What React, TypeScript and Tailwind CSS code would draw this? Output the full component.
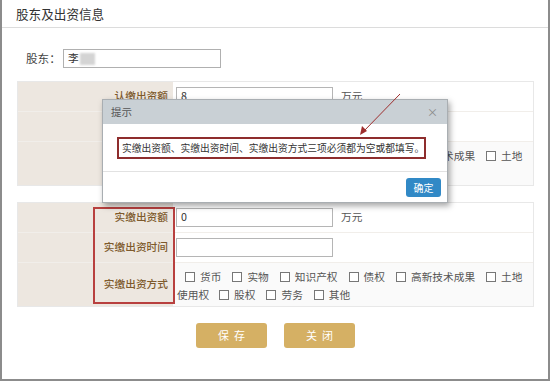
import React from "react";

const firstLine = ["货币", "实物", "知识产权", "债权", "高新技术成果", "土地"];
const secondLine = ["股权", "劳务", "其他"];

const Box = () => (
  <span className="mr-[5px] inline-block h-[10px] w-[10px] shrink-0 border border-[#777] bg-white" />
);

const CheckItem = ({ label }: { label: string }) => (
  <span className="mr-[11px] inline-flex shrink-0 items-center">
    <Box />
    <span>{label}</span>
  </span>
);

const Label = ({ text }: { text: string }) => (
  <div className="flex w-[155px] shrink-0 items-center justify-end bg-[#ede7e0] pr-[5px] font-medium text-[#7e5a2c]">
    {text}
  </div>
);

const InputRow = ({ label, value, unit }: { label: string; value: string; unit?: boolean }) => (
  <div className="flex h-[30px] border-b border-[#f1eeea]">
    <Label text={label} />
    <div className="flex flex-1 items-center pl-[3px]">
      <div className="flex h-[19px] w-[157px] items-center border border-[#b5b5b5] bg-white pl-[4px] text-[#333]">
        {value}
      </div>
      {unit && <span className="ml-[8px] text-[#555]">万元</span>}
    </div>
  </div>
);

const MethodRow = ({ label }: { label: string }) => (
  <div className="flex h-[43px]">
    <Label text={label} />
    <div className="min-w-0 flex-1 bg-[#fafafa] pl-[12px] pt-[5px] leading-[18px] text-[#555]">
      <div className="flex items-center">
        {firstLine.map((l) => (
          <CheckItem key={l} label={l} />
        ))}
      </div>
      <div className="-ml-[8px] flex items-center">
        <span className="mr-[10px]">使用权</span>
        {secondLine.map((l) => (
          <CheckItem key={l} label={l} />
        ))}
      </div>
    </div>
  </div>
);

const Table = ({ prefix, amount }: { prefix: string; amount: string }) => (
  <div className="ml-[15px] w-[517px] border border-[#e8e8e8] text-[10.7px]">
    <InputRow label={`${prefix}出资额`} value={amount} unit />
    <InputRow label={`${prefix}出资时间`} value="" />
    <MethodRow label={`${prefix}出资方式`} />
  </div>
);

export default function App() {
  return (
    <div className="relative h-[381px] w-[550px] overflow-hidden whitespace-nowrap bg-white font-['Noto_Sans_CJK_SC',sans-serif]">
      <div className="h-full w-full border-x-2 border-b-2 border-[#8c8c8c]">
        <div className="h-[28px] border-b border-[#dcdcdc] pl-[14px] pt-[5px] text-[12.6px] leading-[18px] text-[#333]">
          股东及出资信息
        </div>

        <div className="mt-[21px] flex items-center pl-[24px] text-[11.6px] text-[#444]">
          <span className="w-[37px]">股东：</span>
          <div className="flex h-[19px] w-[158px] items-center border border-[#b0b0b0] pl-[4px] text-[10.7px] text-[#333]">
            李<span className="ml-[1px] inline-block h-[12px] w-[15px] bg-[#d4d4d4] blur-[1px]" />
          </div>
        </div>

        <div className="mt-[13px]">
          <Table prefix="认缴" amount="8" />
        </div>
        <div className="mt-[16px]">
          <Table prefix="实缴" amount="0" />
        </div>

        <div className="mt-[16px] flex gap-[17px] pl-[194px]">
          <button className="h-[25px] w-[71px] rounded-[3px] bg-[#d5b064] pl-[5px] text-[11px] tracking-[5px] text-white">
            保存
          </button>
          <button className="h-[25px] w-[71px] rounded-[3px] bg-[#d5b064] pl-[5px] text-[11px] tracking-[5px] text-white">
            关闭
          </button>
        </div>
      </div>

      {/* annotation box around labels */}
      <div className="absolute left-[93px] top-[207px] h-[97px] w-[82px] border-2 border-[#b8403f]" />

      {/* dialog */}
      <div className="absolute left-[102px] top-[99px] w-[346px] border border-[#a9aeb2] bg-white shadow-[2px_3px_6px_rgba(0,0,0,0.35)]">
        <div className="flex h-[24px] items-center justify-between bg-[#c9d0d5] pl-[8px] pr-[9px] text-[10.5px] text-[#555]">
          <span>提示</span>
          <span className="text-[11px] text-[#888]">×</span>
        </div>
        <div className="h-[48px] border-b border-[#e2e2e2] pl-[14px] pt-[13px]">
          <div className="flex h-[22px] w-[309px] items-center border-2 border-[#8e2d2d] pl-[3px] text-[9.75px] text-[#333]">
            实缴出资额、实缴出资时间、实缴出资方式三项必须都为空或都填写。
          </div>
        </div>
        <div className="flex h-[30px] items-center justify-end pr-[6px]">
          <button className="h-[19px] w-[35px] rounded-[3px] bg-[#3189c6] text-[10px] text-white">确定</button>
        </div>
      </div>

      {/* red arrow */}
      <svg className="pointer-events-none absolute left-0 top-0" width="550" height="381" viewBox="0 0 550 381">
        <line x1="400" y1="94" x2="363" y2="132" stroke="#9e2e2e" strokeWidth="1" />
        <path d="M360 135 L362 126 L367 131 Z" fill="#9e2e2e" />
      </svg>
    </div>
  );
}
